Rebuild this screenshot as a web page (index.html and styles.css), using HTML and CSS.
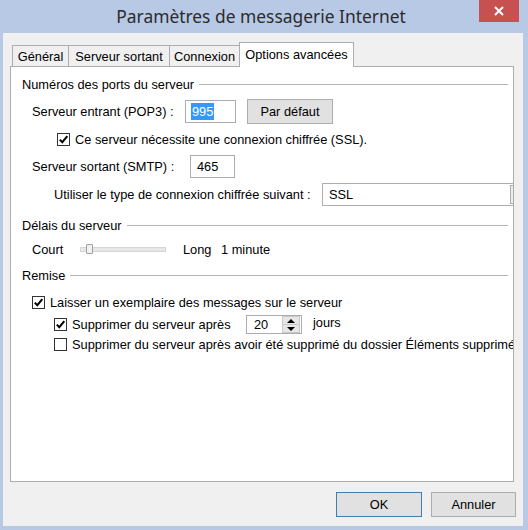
FILE: index.html
```html
<!DOCTYPE html>
<html lang="fr">
  <head>
    <meta charset="UTF-8" />
    <title>Paramètres de messagerie Internet</title>
    <link rel="stylesheet" href="styles.css">
  </head>
  <body>
    <div class="window">
      <div class="titlebar">
        <span class="title">Paramètres de messagerie Internet</span>
        <span class="close">
          <svg width="10" height="10" viewBox="0 0 10 10">
            <path d="M1 1 L9 9 M9 1 L1 9" stroke="#fff" stroke-width="2" />
          </svg>
        </span>
      </div>
      <div class="client">
        <div class="tabs">
          <div class="tab w-gen">Général</div>
          <div class="tab w-out">Serveur sortant</div>
          <div class="tab w-con">Connexion</div>
          <div class="tab active w-adv">Options avancées</div>
        </div>

        <div class="panel">
          <div class="group g-ports">Numéros des ports du serveur</div>

          <div class="row r-pop">
            <span class="lbl lbl-pop">Serveur entrant (POP3) :</span>
            <span class="field f-pop"><span class="sel">995</span></span>
            <span class="btn btn-def">Par défaut</span>
          </div>

          <div class="row r-ssl">
            <span class="cb">
              <svg width="11" height="11" viewBox="0 0 11 11">
                <path d="M1.8 5.6 L4.3 8.2 L9.3 2.2" fill="none" stroke="#000" stroke-width="2" />
              </svg>
            </span>
            <span>Ce serveur nécessite une connexion chiffrée (SSL).</span>
          </div>

          <div class="row r-smtp">
            <span class="lbl lbl-smtp">Serveur sortant (SMTP) :</span>
            <span class="field f-smtp">465</span>
          </div>

          <div class="row r-enc">
            <span class="lbl lbl-enc">Utiliser le type de connexion chiffrée suivant :</span>
            <span class="field f-enc">SSL<span class="drop"></span></span>
          </div>

          <div class="group g-delay">Délais du serveur</div>

          <div class="row r-court">
            <span class="lbl lbl-court">Court</span>
            <span class="slider"><span class="track"></span><span class="thumb"></span></span>
            <span class="lbl lbl-long">Long</span>
            <span>1 minute</span>
          </div>

          <div class="group g-remise">Remise</div>

          <div class="row r-keep">
            <span class="cb">
              <svg width="11" height="11" viewBox="0 0 11 11">
                <path d="M1.8 5.6 L4.3 8.2 L9.3 2.2" fill="none" stroke="#000" stroke-width="2" />
              </svg>
            </span>
            <span>Laisser un exemplaire des messages sur le serveur</span>
          </div>

          <div class="row r-days">
            <span class="cb">
              <svg width="11" height="11" viewBox="0 0 11 11">
                <path d="M1.8 5.6 L4.3 8.2 L9.3 2.2" fill="none" stroke="#000" stroke-width="2" />
              </svg>
            </span>
            <span class="lbl lbl-days">Supprimer du serveur après</span>
            <span class="field spin">20
              <span class="arrows"><span class="up"></span><span class="down"></span></span>
            </span>
            <span class="lbl-jours">jours</span>
          </div>

          <div class="row r-trash">
            <span class="cb"></span>
            <span class="lbl">Supprimer du serveur après avoir été supprimé du dossier Éléments supprimés</span>
          </div>
        </div>

        <div class="actions">
          <span class="btn btn-ok">OK</span>
          <span class="btn btn-cancel">Annuler</span>
        </div>
      </div>
    </div>
  </body>
</html>
```

FILE: styles.css
```css
* {
  box-sizing: border-box;
}
body {
  margin: 0;
  font-family: "Liberation Sans", Arial, sans-serif;
  font-size: 12.8px;
  color: #000;
}

/* window frame */
.window {
  width: 528px;
  height: 530px;
  background: #b8c9e6;
  display: flex;
  flex-direction: column;
  overflow: hidden;
}
.titlebar {
  height: 33px;
  position: relative;
  display: flex;
  justify-content: center;
  align-items: center;
}
.title {
  font-family: "Noto Sans", sans-serif;
  font-size: 17.4px;
  color: #2b2b2b;
  margin-left: -6px;
  padding-bottom: 2px;
}
.close {
  position: absolute;
  top: 0;
  right: 9px;
  width: 40px;
  height: 22px;
  background: #c75050;
  display: flex;
  align-items: center;
  justify-content: center;
}
.client {
  flex: 1;
  margin: 0 5px 4px 3px;
  background: #f0f0f0;
  padding: 9px 9px 0 7px;
  display: flex;
  flex-direction: column;
}

/* tabs */
.tabs {
  display: flex;
  align-items: flex-end;
  height: 24px;
  margin-left: 2px;
  position: relative;
  z-index: 1;
}
.tab {
  height: 21px;
  border: 1px solid #adadad;
  border-bottom: none;
  background: #f0f0f0;
  display: flex;
  justify-content: center;
  padding-top: 3px;
  margin-right: -1px;
}
.tab.active {
  height: 25px;
  margin-bottom: -1px;
  background: #fff;
  padding-top: 4px;
}
.w-gen { width: 57px; }
.w-out { width: 102px; }
.w-con { width: 71px; }
.w-adv { width: 115px; }

.panel {
  height: 416px;
  background: #fff;
  border: 1px solid #adadad;
  padding-left: 11px;
  overflow: hidden;
  display: flex;
  flex-direction: column;
}

/* group headings with rule */
.group {
  display: flex;
  align-items: center;
  height: 16px;
  margin-right: 5px;
}
.group::after {
  content: "";
  flex: 1;
  height: 1px;
  background: #b4b4b4;
  margin-left: 5px;
}
.g-ports { margin-top: 9px; }
.g-delay { margin-top: 11px; }
.g-remise { margin-top: 10px; }

.row {
  display: flex;
  align-items: center;
  height: 16px;
  white-space: nowrap;
  flex: none;
}
.r-pop { margin-top: 8px; height: 23px; padding-left: 10px; }
.r-ssl { margin-top: 8px; padding-left: 35px; }
.r-smtp { margin-top: 8px; height: 23px; padding-left: 10px; }
.r-enc { margin-top: 5px; height: 23px; padding-left: 32px; }
.r-court { margin-top: 8px; padding-left: 10px; }
.r-keep { margin-top: 11px; padding-left: 10px; }
.r-days { margin-top: 5px; height: 19px; padding-left: 32px; }
.r-trash { margin-top: 2px; padding-left: 32px; }

.lbl { flex: none; }
.lbl-pop { width: 153px; }
.lbl-smtp { width: 158px; }
.lbl-enc { width: 268px; }
.lbl-court { width: 48px; }
.lbl-long { width: 38px; }
.lbl-days { width: 174px; }
.lbl-jours { margin-left: 11px; padding-bottom: 4px; }

/* inputs */
.field {
  height: 23px;
  border: 1px solid #abadb3;
  background: #fff;
  display: flex;
  align-items: center;
  padding-left: 6px;
  flex: none;
}
.f-pop { width: 51px; padding-left: 5px; }
.f-smtp { width: 45px; }
.f-enc { width: 212px; }
.sel {
  background: #3399ff;
  color: #fff;
  padding: 1px;
}
.drop {
  margin-left: auto;
  margin-right: 1px;
  width: 22px;
  height: 19px;
  border: 1px solid #adadad;
  background: #ececec;
}
.spin {
  width: 56px;
  height: 19px;
  padding-left: 7px;
  padding-right: 1px;
}
.arrows {
  margin-left: auto;
  width: 18px;
  height: 17px;
  display: flex;
  flex-direction: column;
}
.arrows span {
  flex: 1;
  background: #e6e6e6;
  border: 1px solid #c8c8c8;
  display: flex;
  align-items: center;
  justify-content: center;
}
.arrows .down { border-top: none; }
.up::before,
.down::before {
  content: "";
  border-left: 4px solid transparent;
  border-right: 4px solid transparent;
}
.up::before { border-bottom: 4px solid #000; }
.down::before { border-top: 4px solid #000; }

/* slider */
.slider {
  width: 86px;
  height: 10px;
  margin-right: 17px;
  position: relative;
  flex: none;
}
.track {
  display: block;
  margin-top: 3px;
  height: 5px;
  background: #e7e7e7;
  border: 1px solid #d6d6d6;
}
.thumb {
  position: absolute;
  left: 6px;
  top: 0;
  width: 7px;
  height: 10px;
  background: #f0f0f0;
  border: 1px solid #a0a0a0;
  border-radius: 1px;
}

/* checkboxes */
.cb {
  width: 13px;
  height: 13px;
  border: 1px solid #333;
  background: #fff;
  margin-right: 5px;
  flex: none;
  display: flex;
  align-items: center;
  justify-content: center;
}

/* buttons */
.btn {
  height: 25px;
  border: 1px solid #adadad;
  background: #e1e1e1;
  display: flex;
  align-items: center;
  justify-content: center;
  flex: none;
}
.btn-def { width: 86px; margin-left: 11px; }
.actions {
  display: flex;
  justify-content: flex-end;
  gap: 9px;
  margin-top: 10px;
  margin-right: -2px;
}
.btn-ok { width: 86px; border-color: #3c7fb1; }
.btn-cancel { width: 85px; }
```
